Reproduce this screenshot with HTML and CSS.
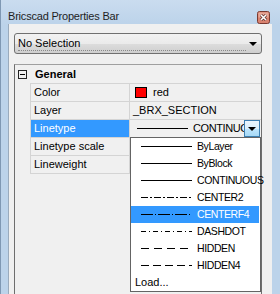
FILE: index.html
```html
<!DOCTYPE html>
<html lang="en">
<head>
  <meta charset="UTF-8">
  <title>Bricscad Properties Bar</title>
  <link rel="stylesheet" href="styles.css">
</head>
<body>

  <div class="window">
    <div class="titlebar">
      <span class="title">Bricscad Properties Bar</span>
      <span class="close">
        <svg width="13" height="13" viewBox="0 0 13 13">
          <rect x="0.5" y="0.5" width="12" height="12" rx="2" fill="#d9826f" stroke="#7a3a30"/>
          <rect x="1.5" y="1.5" width="10" height="5" fill="#e8a898"/>
          <path d="M4 4 L9 9 M9 4 L4 9" stroke="#5a2a24" stroke-width="3"/>
          <path d="M4 4 L9 9 M9 4 L4 9" stroke="#fff" stroke-width="1.6"/>
        </svg>
      </span>
    </div>

    <div class="panel">
      <div class="selector">
        <span class="selector-text">No Selection</span>
        <span class="selector-arrow"></span>
      </div>

      <div class="grid-box">
        <div class="category">
          <span class="toggle"></span>
          <span class="category-name">General</span>
        </div>

        <div class="props">
          <div class="row">
            <div class="label">Color</div>
            <div class="value"><span class="swatch"></span>red</div>
          </div>
          <div class="row">
            <div class="label">Layer</div>
            <div class="value">_BRX_SECTION</div>
          </div>
          <div class="row">
            <div class="label selected">Linetype</div>
            <div class="value linetype">
              <svg class="sample" width="51" height="17"><line x1="0" y1="8.5" x2="51" y2="8.5" stroke="#000"/></svg>
              <span class="linetype-name">CONTINUOUS</span>
              <span class="drop-btn"></span>

              <ul class="drop-list">
                <li><svg class="sample" width="51" height="17"><line x1="0" y1="8.5" x2="51" y2="8.5" stroke="#000"/></svg>ByLayer</li>
                <li><svg class="sample" width="51" height="17"><line x1="0" y1="8.5" x2="51" y2="8.5" stroke="#000"/></svg>ByBlock</li>
                <li><svg class="sample" width="51" height="17"><line x1="0" y1="8.5" x2="51" y2="8.5" stroke="#000"/></svg>CONTINUOUS</li>
                <li><svg class="sample" width="51" height="17"><line x1="0" y1="8.5" x2="51" y2="8.5" stroke="#000" stroke-dasharray="7 2 2 2"/></svg>CENTER2</li>
                <li class="active"><svg class="sample" width="51" height="17"><line x1="0" y1="8.5" x2="51" y2="8.5" stroke="#000" stroke-dasharray="12 2 1 2"/></svg>CENTERF4</li>
                <li><svg class="sample" width="51" height="17"><line x1="0" y1="8.5" x2="51" y2="8.5" stroke="#000" stroke-dasharray="5 3 1 3"/></svg>DASHDOT</li>
                <li><svg class="sample" width="51" height="17"><line x1="0" y1="8.5" x2="51" y2="8.5" stroke="#000" stroke-dasharray="8 5"/></svg>HIDDEN</li>
                <li><svg class="sample" width="51" height="17"><line x1="0" y1="8.5" x2="51" y2="8.5" stroke="#000" stroke-dasharray="8 4"/></svg>HIDDEN4</li>
                <li class="load">Load...</li>
              </ul>
            </div>
          </div>
          <div class="row">
            <div class="label">Linetype scale</div>
            <div class="value"></div>
          </div>
          <div class="row">
            <div class="label">Lineweight</div>
            <div class="value"></div>
          </div>
        </div>
      </div>
    </div>
  </div>

</body>
</html>
```

FILE: styles.css
```css
    body {
      margin: 0;
      font-family: 'Liberation Sans', Arial, sans-serif;
      font-size: 11px;
      color: #000;
    }

    .window {
      width: 280px;
      height: 294px;
      box-sizing: border-box;
      display: flex;
      flex-direction: column;
      padding: 0 8px 0 8px;
      border-left: 1px solid #7f98b3;
      background: linear-gradient(#cadcef, #bcd3ea 25px, #bcd3ea);
      overflow: hidden;
    }

    .titlebar {
      height: 25px;
      display: flex;
      justify-content: space-between;
      align-items: flex-start;
      margin-left: -1px;
    }

    .title {
      padding-top: 10px;
      line-height: 13px;
      color: #1e1e1e;
      letter-spacing: -0.2px;
    }

    .close {
      margin-top: 11px;
      margin-right: 2px;
      height: 13px;
    }

    .panel {
      flex: 1;
      background: #f0f0f0;
      border-left: 1px solid #9aabbd;
      margin-left: -1px;
      padding: 9px 10px 0 5px;
      display: flex;
      flex-direction: column;
    }

    .selector {
      height: 21px;
      box-sizing: border-box;
      border: 1px solid #707070;
      border-radius: 3px;
      background: linear-gradient(#f2f2f2, #ebebeb 50%, #dddddd 51%, #cfcfcf);
      display: flex;
      align-items: center;
      padding: 0 4px 0 3px;
    }

    .selector-text {
      flex: 1;
      line-height: 13px;
      border-bottom: 1px dotted #8a8a8a;
      margin-top: 1px;
    }

    .selector-arrow {
      width: 0;
      height: 0;
      margin-left: 3px;
      border-left: 4px solid transparent;
      border-right: 4px solid transparent;
      border-top: 4px solid #000;
    }

    .grid-box {
      margin-top: 10px;
      height: 240px;
      border: 1px solid #6e6e6e;
      border-bottom: none;
      border-top-color: #a0a0a0;
    }

    .category {
      height: 18px;
      display: flex;
      align-items: center;
      padding-left: 3px;
    }

    .toggle {
      width: 9px;
      height: 9px;
      box-sizing: border-box;
      border: 1px solid #222;
      background: linear-gradient(#000, #000) center / 5px 1px no-repeat;
    }

    .category-name {
      margin-left: 8px;
      font-weight: bold;
    }

    .props {
      margin-left: 15px;
      border-top: 1px solid #d4d4d4;
    }

    .row {
      display: grid;
      grid-template-columns: 99px minmax(0, 1fr);
      height: 18px;
      box-sizing: border-box;
      border-left: 1px solid #d4d4d4;
      border-bottom: 1px solid #d4d4d4;
    }

    .label {
      padding-left: 3px;
      line-height: 17px;
      border-right: 1px solid #d4d4d4;
    }

    .label.selected {
      background: #3399ff;
      color: #fff;
    }

    .value {
      min-width: 0;
      padding-left: 3px;
      line-height: 17px;
      display: flex;
      align-items: center;
      white-space: nowrap;
    }

    .swatch {
      width: 12px;
      height: 11px;
      box-sizing: border-box;
      margin: 0 6px 0 2px;
      background: #ff0000;
      border: 1px solid #000;
    }

    .sample {
      display: block;
      flex: none;
      shape-rendering: crispEdges;
    }

    .linetype {
      position: relative;
    }

    .linetype .sample {
      margin-left: 4px;
    }

    .linetype-name {
      flex: 1;
      min-width: 0;
      overflow: hidden;
      margin-left: 5px;
      letter-spacing: -0.4px;
    }

    .drop-btn {
      flex: none;
      width: 16px;
      height: 17px;
      box-sizing: border-box;
      margin-right: 1px;
      border: 1px solid #3c7fb1;
      background: linear-gradient(#eaf6fd, #d9f0fc 50%, #bee6fd 51%, #a7d9f5);
      position: relative;
    }

    .drop-btn::after {
      content: "";
      position: absolute;
      left: 3px;
      top: 6px;
      border-left: 4px solid transparent;
      border-right: 4px solid transparent;
      border-top: 4px solid #000;
    }

    .drop-list {
      position: absolute;
      top: 100%;
      left: 0;
      width: 131px;
      box-sizing: border-box;
      margin: 0;
      padding: 0;
      list-style: none;
      background: #fff;
      border: 1px solid #646464;
      z-index: 2;
    }

    .drop-list li {
      height: 17px;
      display: flex;
      align-items: center;
      padding-left: 6px;
      white-space: nowrap;
      font-size: 10.5px;
      letter-spacing: -0.4px;
    }

    .drop-list .sample {
      margin-right: 5px;
    }

    .drop-list li.active {
      background: #3399ff;
      color: #fff;
      margin-right: 1px;
    }

    .drop-list li.load {
      padding-left: 4px;
      font-size: 11px;
      letter-spacing: 0;
    }
```
